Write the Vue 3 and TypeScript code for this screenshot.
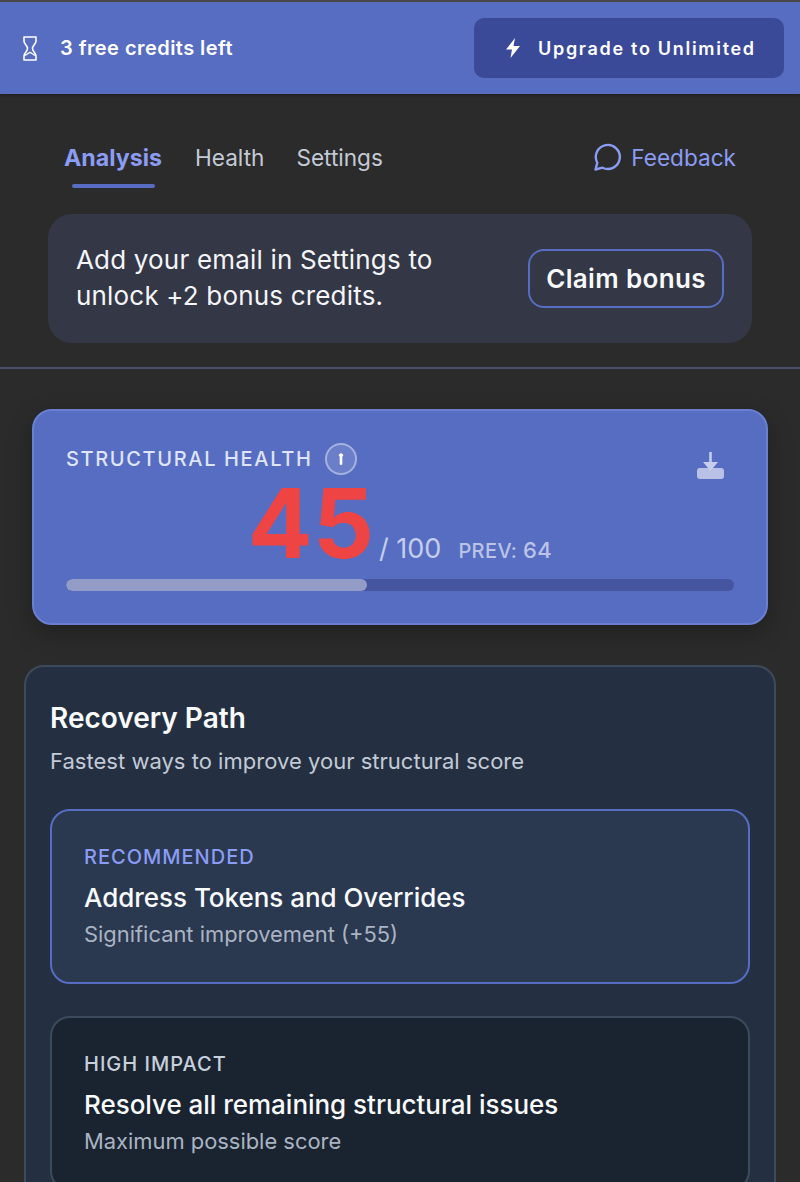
<script setup lang="ts">
interface Path { tag: string; title: string; sub: string; primary: boolean }
const paths: Path[] = [
  { tag: 'RECOMMENDED', title: 'Address Tokens and Overrides', sub: 'Significant improvement (+55)', primary: true },
  { tag: 'HIGH IMPACT', title: 'Resolve all remaining structural issues', sub: 'Maximum possible score', primary: false },
]
const score = 45
</script>

<template>
  <div class="page">
    <header class="banner">
      <div class="credits">
        <svg class="hourglass" width="14" height="25" viewBox="0 0 14 25" fill="none" stroke="#fff" stroke-width="1.600" stroke-linejoin="round">
          <path d="M1 1h12v4c0 3-3.500 4.500-3.500 7.500S13 17 13 20v4H1v-4c0-3 3.500-4.500 3.500-7.500S1 8 1 5z" />
          <path d="M1.500 19.500c2.200-.8 3.800-2.500 5.500-3.200 1.700.7 3.300 2.400 5.500 3.200" stroke-width="1.300" />
        </svg>
        <span>3 free credits left</span>
      </div>
      <button class="upgrade">
        <svg width="16" height="20" viewBox="0 0 16 20"><path d="M10 0 1 11.500h6L5.500 20 15 8H8.500z" fill="#fff" /></svg>
        <span>Upgrade to Unlimited</span>
      </button>
    </header>

    <section class="top">
      <nav class="tabs">
        <div class="tablist">
          <a class="tab active">Analysis</a>
          <a class="tab">Health</a>
          <a class="tab">Settings</a>
        </div>
        <a class="feedback">
          <svg width="28" height="28" viewBox="0 0 28 28" fill="none" stroke="#8b9cf4" stroke-width="2.400" stroke-linejoin="round">
            <path d="M1.500 26.500l1.800-6.800A12 12 0 1 1 8.500 24.700z" />
          </svg>
          <span>Feedback</span>
        </a>
      </nav>
      <div class="notice">
        <p>Add your email in Settings to<br />unlock +2 bonus credits.</p>
        <button class="claim">Claim bonus</button>
      </div>
    </section>

    <section class="health">
      <div class="health-head">
        <span class="label">STRUCTURAL HEALTH</span>
        <span class="info"><svg width="6" height="12" viewBox="0 0 6 12"><path d="M1.700 3.500a1.300 1.300 0 0 1-.4-2.300L3 0l1.700 1.200a1.300 1.300 0 0 1-.4 2.300V11a1.300 1 0 0 1-2.600 0z" fill="#fff" /></svg></span>
        <svg class="download" width="28" height="28" viewBox="0 0 28 28">
          <rect x="0" y="16" width="27" height="11" rx="3" fill="#b9c2e6" />
          <path d="M13.500 0v13" stroke="#c6cdec" stroke-width="2.600" fill="none" />
          <path d="M6 10h15l-7.500 9z" fill="#c6cdec" />
        </svg>
      </div>
      <div class="score-row">
        <span class="score">{{ score }}</span>
        <span class="max">/ 100</span>
        <span class="prev">PREV: <b>64</b></span>
      </div>
      <div class="track"><div class="fill" :style="{ width: score + '%' }"></div></div>
    </section>

    <section class="recovery">
      <h2>Recovery Path</h2>
      <p class="lead">Fastest ways to improve your structural score</p>
      <div class="paths">
        <article v-for="p in paths" :key="p.tag" class="path" :class="{ primary: p.primary }">
          <div class="tag">{{ p.tag }}</div>
          <div class="title">{{ p.title }}</div>
          <div class="sub">{{ p.sub }}</div>
        </article>
      </div>
    </section>
  </div>
</template>

<style>
html, body { margin: 0; background: #2b2b2b; overflow: hidden; }
</style>

<style scoped>
.page {
  height: 1182px;
  overflow: hidden;
  background: #2b2b2b;
  font-family: Inter, "Liberation Sans", sans-serif;
  border-top: 2px solid #474747;
  box-sizing: border-box;
}
.banner {
  height: 92px;
  box-sizing: border-box;
  background: #566dc2;
  display: flex;
  align-items: center;
  justify-content: space-between;
  padding: 0 16px 0 23px;
  box-shadow: 0 1px 3px rgba(0, 0, 0, .3);
}
.credits {
  display: flex;
  align-items: center;
  gap: 23px;
  color: #fff;
  font-size: 20px;
  font-weight: 600;
  letter-spacing: .45px;
}
.hourglass { display: block; }
.upgrade {
  width: 310px;
  height: 60px;
  border: 0;
  border-radius: 10px;
  background: #3a4a99;
  color: #fff;
  font: 600 18px Inter, "Liberation Sans", sans-serif;
  letter-spacing: 1.700px;
  display: flex;
  align-items: center;
  padding: 0 0 0 31px;
  gap: 17px;
}
.top { padding: 0 48px 24px; border-bottom: 2px solid #475066; }
.tabs {
  height: 120px;
  display: flex;
  align-items: center;
  justify-content: space-between;
  padding: 8px 16px 0;
  box-sizing: border-box;
  font-size: 22.600px;
}
.tablist { display: flex; gap: 32px; }
.tab { color: #c4cad6; position: relative; line-height: 30px; }
.tab.active { color: #8b9cf4; font-size: 23.200px; font-weight: 700; margin-right: 1px; }
.tab.active::after {
  content: "";
  position: absolute;
  left: 8px;
  right: 7px;
  bottom: -15px;
  height: 4px;
  border-radius: 2px;
  background: #566dc2;
}
.feedback { display: flex; align-items: center; gap: 9px; color: #8b9cf4; margin-top: -2px; }
.notice {
  height: 129px;
  box-sizing: border-box;
  background: #343746;
  border-radius: 24px;
  padding: 0 28px;
  display: flex;
  align-items: center;
  justify-content: space-between;
}
.notice p { margin: -2px 0 0; color: #f4f5f8; font-size: 26px; line-height: 36px; letter-spacing: .18px; }
.claim {
  width: 196px;
  height: 59px;
  box-sizing: border-box;
  border: 2px solid #566dc2;
  border-radius: 16px;
  background: transparent;
  color: #f8f9fb;
  font: 600 26px Inter, "Liberation Sans", sans-serif;
  letter-spacing: .35px;
}
.health {
  margin: 40px 32px 0;
  height: 216px;
  box-sizing: border-box;
  background: #566dc2;
  border: 2px solid #6a7fcf;
  border-radius: 20px;
  padding: 32px 32px 0;
  box-shadow: 0 8px 24px rgba(0, 0, 0, .25);
}
.health-head { display: flex; align-items: center; gap: 13px; height: 32px; position: relative; }
.label { color: #dfe4f6; font-size: 20px; font-weight: 500; letter-spacing: 1.640px; }
.info {
  width: 32px;
  height: 32px;
  box-sizing: border-box;
  border: 2px solid rgba(255, 255, 255, .4);
  border-radius: 50%;
  background: rgba(255, 255, 255, .12);
  display: flex;
  align-items: center;
  justify-content: center;
}
.download { position: absolute; right: 9px; top: 9px; }
.score-row {
  display: flex;
  align-items: baseline;
  justify-content: center;
  height: 89px;
  padding-top: 9px;
  box-sizing: border-box;
}
.score { color: #ef4444; font-size: 96px; font-weight: 700; line-height: 78px; }
.max { color: #c6cdec; font-size: 27px; margin-left: 5px; }
.prev { color: #bcc4e6; font-size: 20px; font-weight: 500; letter-spacing: .4px; margin-left: 17px; }
.prev b { font-size: 22px; font-weight: 500; letter-spacing: .5px; }
.track { height: 12px; border-radius: 6px; background: #45559f; margin-top: 15px; overflow: hidden; }
.fill { height: 100%; border-radius: 6px; background: #929cc7; }
.recovery {
  margin: 40px 24px 0;
  height: 600px;
  box-sizing: border-box;
  background: #243042;
  border: 2px solid #3d4a5c;
  border-radius: 20px;
  padding: 34px 24px 0;
}
h2 { margin: -1px 0 1px; color: #f8fafc; font-size: 28px; font-weight: 600; line-height: 36px; }
.lead { margin: 9px 0 0; color: #c3cad6; font-size: 22px; line-height: 32px; letter-spacing: .02px; }
.paths { display: flex; flex-direction: column; gap: 32px; margin-top: 32px; }
.path {
  height: 175px;
  box-sizing: border-box;
  padding: 32px 32px 0;
  background: #1a2431;
  border: 2px solid #3d4a5c;
  border-radius: 20px;
}
.path.primary { background: #2a3850; border-color: #566dc2; }
.tag { color: #c8d0dc; font-size: 20px; font-weight: 500; letter-spacing: 1px; line-height: 28px; }
.primary .tag { color: #8b9cf4; }
.title { color: #f8fafc; font-size: 26px; font-weight: 500; line-height: 36px; margin-top: 9px; letter-spacing: -.03px; }
.sub { color: #aab4c2; font-size: 21.900px; line-height: 30px; margin-top: 3px; }
</style>
